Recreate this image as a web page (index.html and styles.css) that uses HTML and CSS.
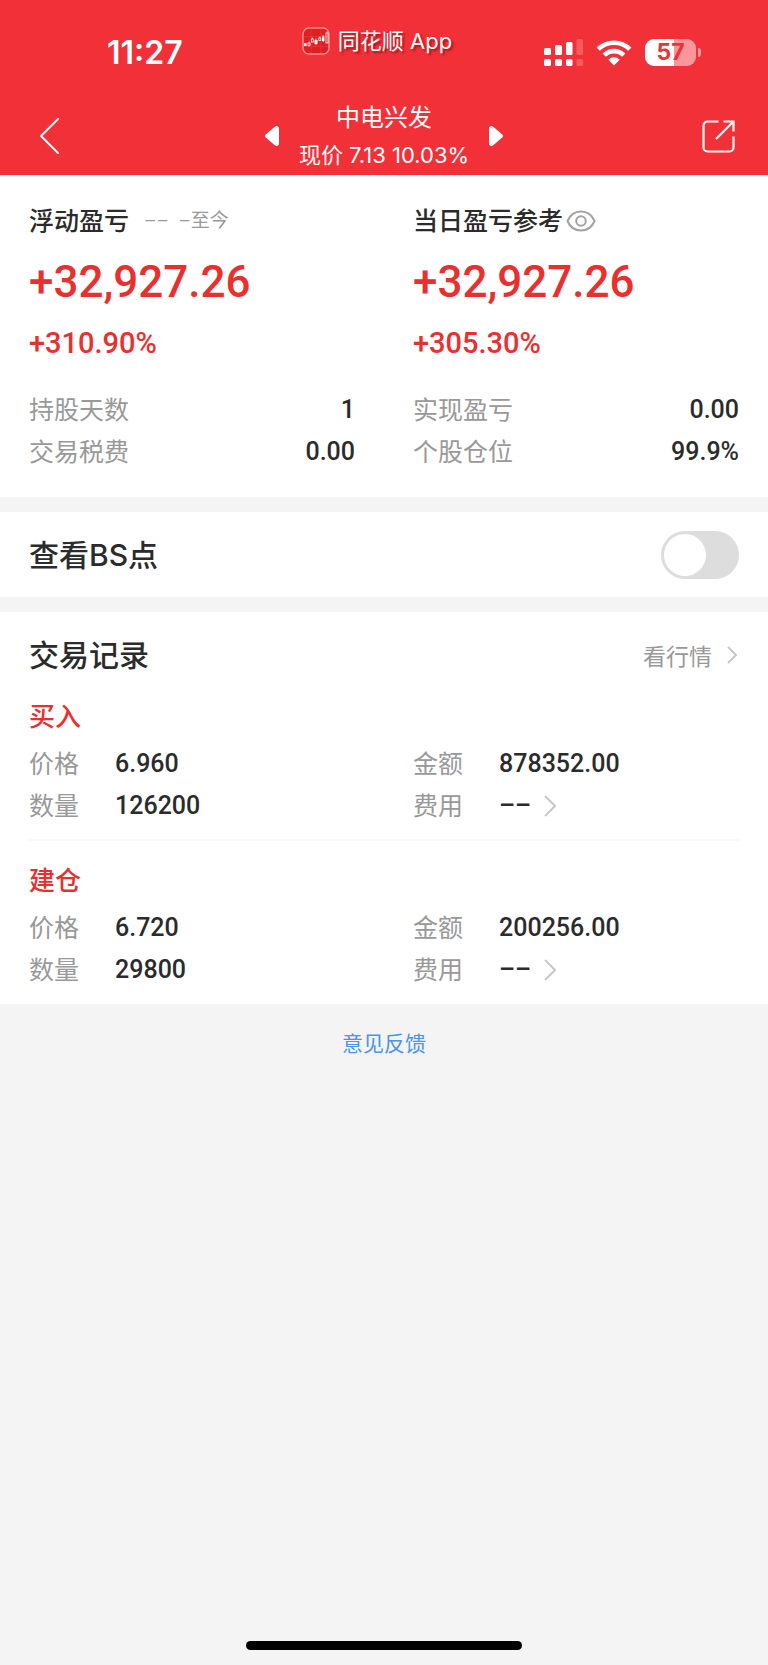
FILE: index.html
```
<!DOCTYPE html>
<html lang="zh-CN">
<head>
<meta charset="utf-8">
<meta name="viewport" content="width=device-width, initial-scale=1">
<title>中电兴发</title>
<link rel="stylesheet" href="styles.css">
</head>
<body>
<header class="header">
  <div class="status">
    <time class="clock">11:27</time>
    <div class="brand">
      <svg class="brand-logo" width="28" height="28" viewBox="0 0 28 28" aria-hidden="true">
        <rect x="1" y="1" width="26" height="26" rx="6" fill="#e01f22" stroke="#f98a8c" stroke-width="1.5"/>
        <path d="M2 9.500h24M2 19.500h24M9 2v24M19 2v24" stroke="#ec4043" stroke-width=".5"/>
        <g fill="#fff"><rect x="2" y="16" width="2.600" height="3"/><rect x="12.500" y="13" width="3" height="4"/><rect x="20" y="9.500" width="2.400" height="4.500"/></g>
        <g fill="none" stroke="#fff" stroke-width=".8"><rect x="6" y="16" width="2" height="2.500"/><rect x="9.300" y="12" width="2" height="3"/><rect x="16.800" y="11" width="2" height="2.500"/><rect x="24" y="6" width="2" height="10"/><path d="M7 14.500v1.500M7 18.500v1M10.300 10.500v1.500M14 11.500v6.500M17.800 9.500v1.500M21.200 8v7M25 4.500v1.500"/></g>
      </svg>
      <span>同花顺 App</span>
    </div>
    <div class="indicators">
      <svg width="39" height="27" viewBox="0 0 39 27" fill="#fff" role="img" aria-label="信号">
        <rect x="0" y="9" width="7" height="7" rx="1.500"/><rect x="11" y="6" width="7" height="10" rx="1.500"/><rect x="22" y="3" width="6.500" height="13" rx="1.500"/>
        <rect x="0" y="20" width="7" height="7" rx="1.500"/><rect x="11" y="20" width="7" height="7" rx="1.500"/><rect x="22" y="20" width="6.500" height="7" rx="1.500"/>
        <g opacity=".2"><rect x="32.500" y="0" width="6.500" height="16" rx="1.500"/><rect x="32.500" y="20" width="6.500" height="7" rx="1.500"/></g>
      </svg>
      <svg width="36" height="26" viewBox="0 0 36 26" role="img" aria-label="无线网络">
        <g fill="none" stroke="#fff" stroke-width="4.600"><path d="M2.200 9.200a22.400 22.400 0 0 1 31.600 0"/><path d="M8.200 15.200a13.900 13.900 0 0 1 19.600 0"/></g>
        <path d="M12.300 19.700a8 8 0 0 1 11.400 0L18 25.500z" fill="#fff"/>
      </svg>
      <div class="battery"><span class="battery-level">57</span><span class="battery-tip"></span></div>
    </div>
  </div>
  <nav class="nav">
    <button class="icon-button" aria-label="返回">
      <svg width="33" height="38" viewBox="0 0 33 38" fill="none" stroke="#fff" stroke-width="2" stroke-linecap="round" stroke-linejoin="round"><path d="M25 2 8 19l17 17"/></svg>
    </button>
    <div class="stock">
      <button class="icon-button" aria-label="上一只"><svg width="14" height="20" viewBox="0 0 14 20" fill="#fff"><path d="M1 8.200 9.800.700C11.500-.600 14 .200 14 2.500v15c0 2.300-2.500 3.100-4.200 1.800L1 11.800c-1.300-1.100-1.300-2.500 0-3.600z"/></svg></button>
      <div class="stock-text">
        <h1 class="stock-name">中电兴发</h1>
        <p class="stock-price">现价 7.13 10.03%</p>
      </div>
      <button class="icon-button" aria-label="下一只"><svg width="14" height="20" viewBox="0 0 14 20" fill="#fff"><path d="M13 8.200 4.200.700C2.500-.600 0 .200 0 2.500v15c0 2.300 2.500 3.100 4.200 1.800L13 11.800c1.300-1.100 1.300-2.500 0-3.600z"/></svg></button>
    </div>
    <button class="icon-button share" aria-label="分享">
      <svg width="33" height="33" viewBox="0 0 33 33" fill="none" stroke="#fff" stroke-width="2.200"><path d="M16.500 1.500H5.500a4 4 0 0 0-4 4v22a4 4 0 0 0 4 4h22a4 4 0 0 0 4-4V16.500"/><path d="M21.500 1.500h10v10M31 2 14 19"/></svg>
    </button>
  </nav>
</header>

<main>
  <section class="card summary">
    <div class="column">
      <h2 class="column-title">浮动盈亏<small class="since">–– &nbsp;–至今</small></h2>
      <p class="profit">+32,927.26</p>
      <p class="rate">+310.90%</p>
      <dl class="facts">
        <div class="fact"><dt>持股天数</dt><dd>1</dd></div>
        <div class="fact"><dt>交易税费</dt><dd>0.00</dd></div>
      </dl>
    </div>
    <div class="column">
      <h2 class="column-title">当日盈亏参考<button class="icon-button" aria-label="显示或隐藏"><svg width="30" height="22" viewBox="0 0 30 22" fill="none" stroke="#a3a3a3" stroke-width="2"><path d="M1.500 11C4 5 9 1.500 15 1.500S26 5 28.500 11C26 17 21 20.500 15 20.500S4 17 1.500 11z"/><circle cx="15" cy="11" r="4.800"/></svg></button></h2>
      <p class="profit">+32,927.26</p>
      <p class="rate">+305.30%</p>
      <dl class="facts">
        <div class="fact"><dt>实现盈亏</dt><dd>0.00</dd></div>
        <div class="fact"><dt>个股仓位</dt><dd>99.9%</dd></div>
      </dl>
    </div>
  </section>

  <section class="card option">
    <label class="section-title" for="bs">查看BS点</label>
    <input class="switch" type="checkbox" role="switch" id="bs">
  </section>

  <section class="card records">
    <div class="records-head">
      <h2 class="section-title">交易记录</h2>
      <a class="quote-link" href="#">看行情<svg width="10" height="18" viewBox="0 0 10 18" fill="none" stroke="#c8c8c8" stroke-width="2"><path d="m1 1 8 8-8 8"/></svg></a>
    </div>
    <article class="record">
      <h3 class="record-title">买入</h3>
      <dl class="record-grid">
        <div class="pair"><dt>价格</dt><dd>6.960</dd></div>
        <div class="pair"><dt>金额</dt><dd>878352.00</dd></div>
        <div class="pair"><dt>数量</dt><dd>126200</dd></div>
        <div class="pair"><dt>费用</dt><dd><a class="fee" href="#">––<svg width="12" height="22" viewBox="0 0 12 22" fill="none" stroke="#c8c8c8" stroke-width="2"><path d="m1 1 10 10L1 21"/></svg></a></dd></div>
      </dl>
    </article>
    <article class="record">
      <h3 class="record-title">建仓</h3>
      <dl class="record-grid">
        <div class="pair"><dt>价格</dt><dd>6.720</dd></div>
        <div class="pair"><dt>金额</dt><dd>200256.00</dd></div>
        <div class="pair"><dt>数量</dt><dd>29800</dd></div>
        <div class="pair"><dt>费用</dt><dd><a class="fee" href="#">––<svg width="12" height="22" viewBox="0 0 12 22" fill="none" stroke="#c8c8c8" stroke-width="2"><path d="m1 1 10 10L1 21"/></svg></a></dd></div>
      </dl>
    </article>
  </section>
</main>

<footer class="footer">
  <a class="feedback" href="#">意见反馈</a>
  <div class="home-bar"></div>
</footer>
</body>
</html>
```
FILE: styles.css
```
* { box-sizing: border-box; }

body {
  margin: 0;
  min-height: 100vh;
  display: flex;
  flex-direction: column;
  background: #f4f4f4;
  color: #2b2b2b;
  font-family: Inter, "Noto Sans CJK SC", sans-serif;
  font-size: 25px;
}

h1, h2, h3, p, dl, dd { margin: 0; font-weight: 400; }
a { color: inherit; text-decoration: none; }
svg { display: block; }

.icon-button {
  padding: 0;
  border: 0;
  background: none;
}

.header { background: #f23038; color: #fff; }

.status {
  display: grid;
  grid-template-columns: 1fr auto 1fr;
  align-items: center;
  height: 97px;
  padding: 8px 67px 0 53px;
}
.clock {
  padding-left: 54px;
  font-size: 32px;
  font-weight: 600;
  line-height: 40px;
}
.brand {
  display: flex;
  align-items: center;
  gap: 8px;
  margin-bottom: 24px;
  font-size: 22px;
  line-height: 28px;
  text-shadow: 2px 2px 2px rgba(90, 0, 0, .5);
}
.indicators {
  display: flex;
  align-items: center;
  justify-content: flex-end;
  gap: 13px;
}
.battery { display: flex; align-items: center; gap: 2px; }
.battery-level {
  width: 51px;
  border-radius: 9px;
  background: linear-gradient(90deg, #fff 57%, #f9979b 57%);
  color: #f23038;
  font-size: 23px;
  font-weight: 700;
  line-height: 27px;
  text-align: center;
}
.battery-tip {
  width: 3px;
  height: 9px;
  border-radius: 0 4px 4px 0;
  background: #f9979b;
}

.nav {
  display: grid;
  grid-template-columns: 1fr auto 1fr;
  align-items: center;
  height: 78px;
  padding: 0 33px;
}
.share { justify-self: end; }
.stock { display: flex; align-items: center; gap: 20px; }
.stock-text { text-align: center; }
.stock-name { font-size: 24px; line-height: 38px; }
.stock-price { font-size: 22px; line-height: 36px; }

.card { background: #fff; padding: 0 29px; }
.card + .card { margin-top: 15px; }

.summary {
  display: grid;
  grid-template-columns: 1fr 1fr;
  gap: 58px;
  padding-top: 26px;
  padding-bottom: 24px;
}
.column-title {
  display: flex;
  align-items: center;
  gap: 3px;
  font-size: 25px;
  font-weight: 500;
  line-height: 40px;
}
.since {
  margin-left: 12px;
  color: #999;
  font-family: Roboto, "Noto Sans CJK SC", sans-serif;
  font-size: 19px;
  font-weight: 400;
}
.profit, .rate { color: #ea2f2f; font-family: Roboto, sans-serif; font-weight: 500; }
.profit { font-size: 44px; line-height: 82px; }
.rate { font-size: 29px; line-height: 40px; }
.facts { margin-top: 26px; }
.fact { display: flex; justify-content: space-between; line-height: 42px; }
dt { color: #999; }
dd { font-family: Roboto, sans-serif; font-size: 25px; font-weight: 500; }

.option {
  display: flex;
  align-items: center;
  justify-content: space-between;
  height: 85px;
}
.section-title { font-size: 30px; font-weight: 500; line-height: 46px; }
.switch {
  appearance: none;
  display: flex;
  width: 78px;
  height: 48px;
  margin: 0;
  padding: 3px;
  border-radius: 24px;
  background: #ddd;
}
.switch::before {
  content: "";
  width: 42px;
  height: 42px;
  border-radius: 50%;
  background: #fff;
}
.switch:checked { justify-content: flex-end; background: #f23038; }

.records { padding-top: 20px; padding-bottom: 1px; }
.records-head { display: flex; align-items: center; justify-content: space-between; }
.quote-link {
  display: flex;
  align-items: center;
  gap: 15px;
  padding-right: 2px;
  color: #999;
  font-family: "Noto Sans CJK SC", sans-serif;
  font-size: 23px;
  line-height: 32px;
}
.record { padding: 19px 0 12px; }
.record + .record { border-top: 2px solid #f8f8f8; padding-top: 20px; }
.record-title {
  margin-bottom: 6px;
  color: #ea2f2f;
  font-size: 26px;
  font-weight: 500;
  line-height: 40px;
}
.record-grid { display: grid; grid-template-columns: 1fr 1fr; column-gap: 58px; }
.pair { display: grid; grid-template-columns: 86px 1fr; line-height: 42px; }
.fee { display: inline-flex; align-items: center; gap: 13px; }

.footer {
  flex: 1;
  display: flex;
  flex-direction: column;
  align-items: center;
  justify-content: space-between;
  padding: 24px 0 15px;
}
.feedback { color: #4a93ee; font-size: 21px; line-height: 32px; }
.home-bar { width: 36%; height: 9px; border-radius: 5px; background: #000; }
```
